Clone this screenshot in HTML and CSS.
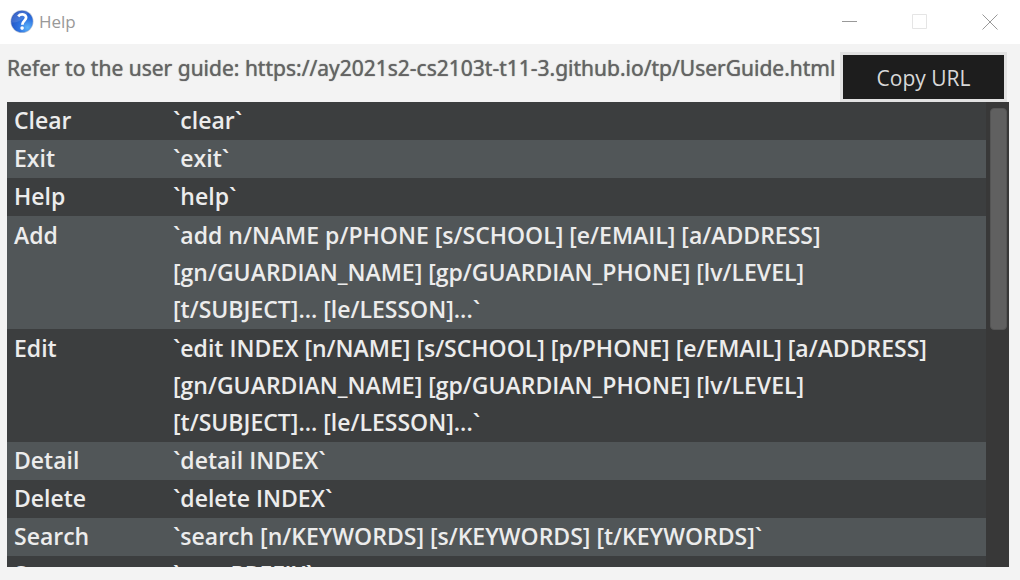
FILE: index.html
```html
<!DOCTYPE html>
<html lang="en">
<head>
<meta charset="utf-8">
<title>Help</title>
<link rel="stylesheet" href="styles.css">
</head>
<body>
<header class="titlebar">
  <svg class="app-icon" viewBox="0 0 24 24" aria-hidden="true">
    <defs>
      <radialGradient id="ball" cx="75%" cy="78%" r="80%">
        <stop offset="0" stop-color="#5cb4fa"/>
        <stop offset="0.5" stop-color="#2d72e0"/>
        <stop offset="1" stop-color="#2455c4"/>
      </radialGradient>
    </defs>
    <circle cx="12" cy="11.5" r="11.5" fill="#b9c3d6"/>
    <circle cx="12" cy="11.5" r="10.8" fill="url(#ball)"/>
    <path d="M1.6 12.5C5 13.1 13 11 18 2.7A10.8 10.8 0 0 0 1.6 12.5Z" fill="#fff" opacity=".12"/>
    <path d="M8.2 6.3C9.4 4.9 10.9 4.3 12.5 4.4C14.9 4.5 16.2 5.9 16.1 7.7C16 10.5 12.5 10.9 12.3 14.7" fill="none" stroke="#fff" stroke-width="2.8"/>
    <circle cx="12.1" cy="18.1" r="1.8" fill="#fff"/>
  </svg>
  <h1 class="title">Help</h1>
  <div class="window-controls">
    <button class="window-button" aria-label="Minimize"><svg viewBox="0 0 16 16"><path d="M0 7.5H15"/></svg></button>
    <button class="window-button" aria-label="Maximize" disabled><svg viewBox="0 0 16 16"><path d="M.5 .5H14.5V14.5H.5Z"/></svg></button>
    <button class="window-button" aria-label="Close"><svg viewBox="0 0 16 16"><path d="M.5 .5L15.5 15.5M15.5 .5L.5 15.5"/></svg></button>
  </div>
</header>
<main class="content">
  <div class="guide">
    <p class="guide-text">Refer to the user guide: https://ay2021s2-cs2103t-t11-3.github.io/tp/UserGuide.html</p>
    <button class="copy">Copy URL</button>
  </div>
  <div class="command-list">
    <div class="viewport">
      <table class="commands">
        <tbody>
          <tr><th scope="row">Clear</th><td>`clear`</td></tr>
          <tr><th scope="row">Exit</th><td>`exit`</td></tr>
          <tr><th scope="row">Help</th><td>`help`</td></tr>
          <tr class="multiline"><th scope="row">Add</th><td>`add n/NAME p/PHONE [s/SCHOOL] [e/EMAIL] [a/ADDRESS]<br>[gn/GUARDIAN_NAME] [gp/GUARDIAN_PHONE] [lv/LEVEL]<br>[t/SUBJECT]... [le/LESSON]...`</td></tr>
          <tr class="multiline"><th scope="row">Edit</th><td>`edit INDEX [n/NAME] [s/SCHOOL] [p/PHONE] [e/EMAIL] [a/ADDRESS]<br>[gn/GUARDIAN_NAME] [gp/GUARDIAN_PHONE] [lv/LEVEL]<br>[t/SUBJECT]... [le/LESSON]...`</td></tr>
          <tr><th scope="row">Detail</th><td>`detail INDEX`</td></tr>
          <tr><th scope="row">Delete</th><td>`delete INDEX`</td></tr>
          <tr><th scope="row">Search</th><td>`search [n/KEYWORDS] [s/KEYWORDS] [t/KEYWORDS]`</td></tr>
          <tr><th scope="row">Sort</th><td>`sort PREFIX`</td></tr>
        </tbody>
      </table>
    </div>
    <div class="scroll-track"><div class="scroll-thumb"></div></div>
  </div>
</main>
</body>
</html>
```

FILE: styles.css
```css
* { box-sizing: border-box; }

body {
  margin: 0;
  height: 100vh;
  display: flex;
  flex-direction: column;
  overflow: hidden;
  background: #f3f3f3;
  font-family: "Open Sans", "Noto Sans", sans-serif;
}

.titlebar {
  display: flex;
  align-items: center;
  flex: none;
  height: 44px;
  padding-left: 10px;
  background: #fff;
}

.app-icon { width: 24px; height: 24px; }

.title {
  margin: 0 0 0 5px;
  font-size: 17px;
  font-weight: 400;
  line-height: 24px;
  color: #999;
}

.window-controls { display: flex; margin-left: auto; }

.window-button {
  display: flex;
  align-items: center;
  justify-content: center;
  width: 70px;
  height: 44px;
  padding: 0 6px 0 0;
  border: 0;
  background: none;
  color: #999;
}

.window-button:last-child { width: 62px; padding: 0 0 0 2px; }
.window-button:disabled { color: #e5e5e5; }

.window-button svg {
  width: 16px;
  height: 16px;
  fill: none;
  stroke: currentColor;
}

.content {
  display: flex;
  flex-direction: column;
  flex: 1;
  min-height: 0;
  padding: 8px 11px 13px 7px;
}

.guide {
  display: flex;
  flex: none;
  height: 50px;
  padding-right: 2px;
}

.guide-text {
  flex: 1;
  min-width: 0;
  margin: 0;
  font-family: "Noto Sans", sans-serif;
  font-size: 21px;
  font-weight: 400;
  line-height: 32px;
  white-space: nowrap;
  color: #646464;
  text-shadow: 0 0 1px #646464;
}

.copy {
  flex: none;
  width: 167px;
  padding: 2px 0 0;
  border: 3px solid #e2e2e2;
  background: #1d1d1d;
  color: #d8d8d8;
  font-family: inherit;
  font-size: 21px;
}

.command-list {
  display: flex;
  flex: 1;
  min-height: 0;
  background: #3c3e3f;
}

.viewport { flex: 1; min-width: 0; overflow: hidden; }

.commands {
  width: 100%;
  border-collapse: collapse;
  table-layout: fixed;
  font-size: 23px;
  font-weight: 600;
  line-height: 37px;
  color: #ececec;
}

.commands th,
.commands td {
  padding: 0 0 1px 7px;
  font-weight: inherit;
  text-align: left;
  vertical-align: top;
  white-space: nowrap;
}

.commands th { width: 159px; }
.commands .multiline > * { padding-top: 1px; }
.commands tr:nth-child(even) { background: #515658; }

.scroll-track {
  flex: none;
  width: 23px;
  padding: 6px 2px 6px 4px;
  background: #383838;
}

.scroll-thumb {
  height: 49%;
  border: 1px solid #555;
  border-radius: 4px;
  background: #606060;
}
```
